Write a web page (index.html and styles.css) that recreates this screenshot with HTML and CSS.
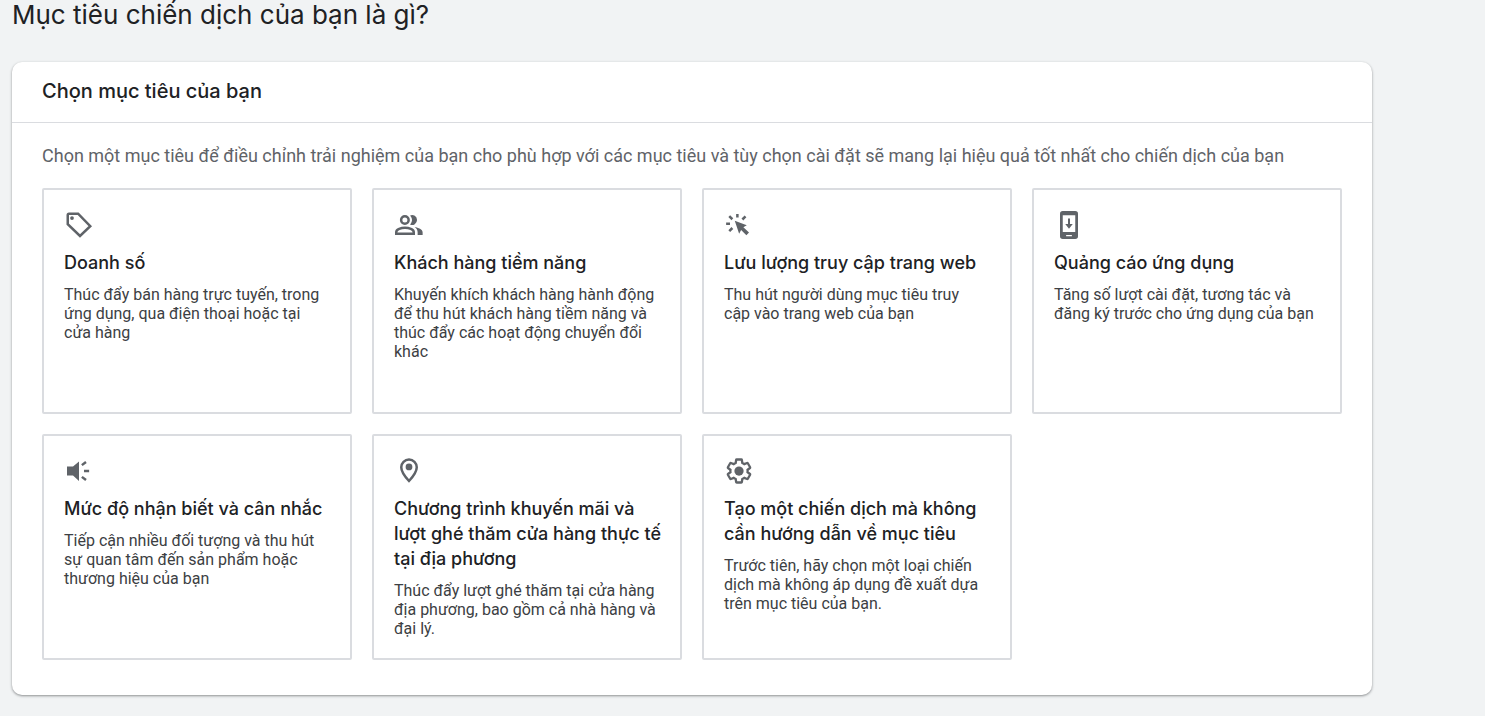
FILE: index.html
```html
<!DOCTYPE html>
<html lang="vi">
<head>
  <meta charset="UTF-8">
  <meta name="viewport" content="width=device-width, initial-scale=1.0">
  <title>Mục tiêu chiến dịch</title>
  <link rel="stylesheet" href="styles.css">
</head>
<body>

  <main class="page">
    <h1 class="page-title">Mục tiêu chiến dịch của bạn là gì?</h1>

    <section class="panel">
      <h2 class="panel-header">Chọn mục tiêu của bạn</h2>

      <div class="panel-body">
        <p class="intro">Chọn một mục tiêu để điều chỉnh trải nghiệm của bạn cho phù hợp với các mục tiêu và tùy chọn cài đặt sẽ mang lại hiệu quả tốt nhất cho chiến dịch của bạn</p>

        <div class="goals">

          <button type="button" class="goal">
            <svg class="icon" viewBox="0 0 24 24" aria-hidden="true">
              <path class="line" d="M3 4a1 1 0 0 1 1-1h7.3L21 13l-8.2 7.8L3 11.4z"/>
              <circle cx="6.4" cy="6.4" r="1.5"/>
            </svg>
            <span class="goal-title">Doanh số</span>
            <span class="goal-text">Thúc đẩy bán hàng trực tuyến, trong ứng dụng, qua điện thoại hoặc tại cửa hàng</span>
          </button>

          <button type="button" class="goal">
            <svg class="icon" viewBox="0 0 24 24" aria-hidden="true">
              <circle class="line" cx="8.7" cy="8" r="3"/>
              <path class="line" d="M1.8 19v-1.4c0-2.3 3.9-3.4 7-3.4s7 1.1 7 3.4V19z"/>
              <path d="M12.9 4.3a4 4 0 1 1 0 7.4 5.8 5.8 0 0 0 0-7.4z"/>
              <path d="M16.5 13.5c3 .5 6.4 1.8 6.4 4.4V20h-4v-2.3c0-1.8-.9-3.2-2.4-4.2z"/>
            </svg>
            <span class="goal-title">Khách hàng tiềm năng</span>
            <span class="goal-text">Khuyến khích khách hàng hành động để thu hút khách hàng tiềm năng và thúc đẩy các hoạt động chuyển đổi khác</span>
          </button>

          <button type="button" class="goal">
            <svg class="icon" viewBox="0 0 24 24" aria-hidden="true">
              <path d="M8.6 8.6l9.6 3.6-2.7 1.6L20 18l-2.1 2.1-4.2-4.2-1.6 3.1z"/>
              <path class="line" d="M10.7 3.2v2.7M1.7 11h3.1M4.2 4.9l2.5 2.5M17.2 5.1l-2.5 2.5M4.2 16.9l2.5-2.5"/>
            </svg>
            <span class="goal-title">Lưu lượng truy cập trang web</span>
            <span class="goal-text">Thu hút người dùng mục tiêu truy cập vào trang web của bạn</span>
          </button>

          <button type="button" class="goal">
            <svg class="icon" viewBox="0 0 24 24" aria-hidden="true">
              <path fill-rule="evenodd" d="M7 .8h10a2.2 2.2 0 0 1 2.2 2.2v18a2.2 2.2 0 0 1-2.2 2.2H7A2.2 2.2 0 0 1 4.8 21V3A2.2 2.2 0 0 1 7 .8zM7 4.2v13.4h10V4.2zM9.7 20v1h4.6v-1z"/>
              <path d="M11.2 6.8h1.6v4.4H15l-3 3.8-3-3.8h2.2z"/>
            </svg>
            <span class="goal-title">Quảng cáo ứng dụng</span>
            <span class="goal-text">Tăng số lượt cài đặt, tương tác và đăng ký trước cho ứng dụng của bạn</span>
          </button>

          <button type="button" class="goal">
            <svg class="icon" viewBox="0 0 24 24" aria-hidden="true">
              <path d="M2.4 8.3h4.8l4.8-4v15.6l-4.8-4.4H2.4z"/>
              <path class="line" d="M16 12h4.1M14.3 7.3l3.3-2.5M14.3 16.7l3.3 2.5"/>
            </svg>
            <span class="goal-title">Mức độ nhận biết và cân nhắc</span>
            <span class="goal-text">Tiếp cận nhiều đối tượng và thu hút sự quan tâm đến sản phẩm hoặc thương hiệu của bạn</span>
          </button>

          <button type="button" class="goal">
            <svg class="icon" viewBox="0 0 24 24" aria-hidden="true">
              <path class="line" d="M12 2.8A6.2 6.2 0 0 0 5.8 9c0 4.3 6.2 11 6.2 11s6.2-6.7 6.2-11A6.2 6.2 0 0 0 12 2.8z"/>
              <circle cx="12" cy="8.7" r="2.7"/>
            </svg>
            <span class="goal-title">Chương trình khuyến mãi và lượt ghé thăm cửa hàng thực tế tại địa phương</span>
            <span class="goal-text">Thúc đẩy lượt ghé thăm tại cửa hàng địa phương, bao gồm cả nhà hàng và đại lý.</span>
          </button>

          <button type="button" class="goal">
            <svg class="icon" viewBox="0 0 24 24" aria-hidden="true">
              <path class="line" transform="translate(.96 .96) scale(.92)" d="M19.43 12.98c.04-.32.07-.64.07-.98 0-.34-.03-.66-.07-.98l2.11-1.65c.19-.15.24-.42.12-.64l-2-3.46c-.09-.16-.26-.25-.44-.25-.06 0-.12.01-.17.03l-2.49 1c-.52-.4-1.08-.73-1.69-.98l-.38-2.65C14.46 2.18 14.25 2 14 2h-4c-.25 0-.46.18-.49.42l-.38 2.65c-.61.25-1.17.59-1.69.98l-2.49-1c-.06-.02-.12-.03-.18-.03-.17 0-.34.09-.43.25l-2 3.46c-.13.22-.07.49.12.64l2.11 1.65c-.04.32-.07.65-.07.98 0 .33.03.66.07.98l-2.11 1.65c-.19.15-.24.42-.12.64l2 3.46c.09.16.26.25.44.25.06 0 .12-.01.17-.03l2.49-1c.52.4 1.08.73 1.69.98l.38 2.65c.03.24.24.42.49.42h4c.25 0 .46-.18.49-.42l.38-2.65c.61-.25 1.17-.59 1.69-.98l2.49 1c.06.02.12.03.18.03.17 0 .34-.09.43-.25l2-3.46c.12-.22.07-.49-.12-.64l-2.11-1.65z"/>
              <circle cx="12" cy="12" r="3.7"/>
            </svg>
            <span class="goal-title">Tạo một chiến dịch mà không cần hướng dẫn về mục tiêu</span>
            <span class="goal-text">Trước tiên, hãy chọn một loại chiến dịch mà không áp dụng đề xuất dựa trên mục tiêu của bạn.</span>
          </button>

        </div>
      </div>
    </section>
  </main>

</body>
</html>
```
FILE: styles.css
```css
* {
  box-sizing: border-box;
}

body {
  margin: 0;
  background-color: #f1f3f4;
  color: #202124;
  font-family: Roboto, "Liberation Sans", sans-serif;
}

h1, h2, p {
  margin: 0;
}

.page {
  max-width: 1384px;
  padding: 0 12px 20px;
}

.page-title {
  margin-bottom: 32px;
  font-family: "Google Sans", Inter, sans-serif;
  font-size: 26px;
  font-weight: 400;
  line-height: 30px;
}

.panel {
  background-color: #fff;
  border-radius: 10px;
  box-shadow: 0 1px 3px rgba(60, 64, 67, 0.3), 0 1px 2px rgba(60, 64, 67, 0.3);
}

.panel-header {
  padding: 17px 30px 18px;
  border-bottom: 1px solid #dadce0;
  font-family: "Google Sans", Inter, sans-serif;
  font-size: 20px;
  font-weight: 500;
  line-height: 25px;
}

.panel-body {
  padding: 20px 30px 35px;
}

.intro {
  margin-bottom: 20px;
  color: #5f6368;
  font-size: 18px;
  line-height: 25px;
}

.goals {
  display: grid;
  grid-template-columns: repeat(4, 1fr);
  grid-auto-rows: 1fr;
  gap: 20px;
}

.goal {
  display: flex;
  flex-direction: column;
  align-items: flex-start;
  gap: 10px;
  padding: 20px 14px 20px 20px;
  border: 2px solid #dadce0;
  border-radius: 2px;
  background-color: #fff;
  font-family: inherit;
  text-align: left;
  cursor: pointer;
}

.goal:hover {
  background-color: #f8f9fa;
}

.icon {
  width: 30px;
  height: 30px;
  fill: #5f6368;
}

.icon .line {
  fill: none;
  stroke: #5f6368;
  stroke-width: 2;
}

.goal-title {
  color: #202124;
  font-family: "Google Sans", Inter, sans-serif;
  font-size: 18px;
  font-weight: 500;
  line-height: 25px;
}

.goal-text {
  padding-right: 8px;
  color: #3c4043;
  font-size: 16px;
  line-height: 19px;
}

@media (max-width: 1100px) {
  .goals {
    grid-template-columns: repeat(2, 1fr);
  }
}

@media (max-width: 600px) {
  .goals {
    grid-template-columns: 1fr;
  }
}
```
